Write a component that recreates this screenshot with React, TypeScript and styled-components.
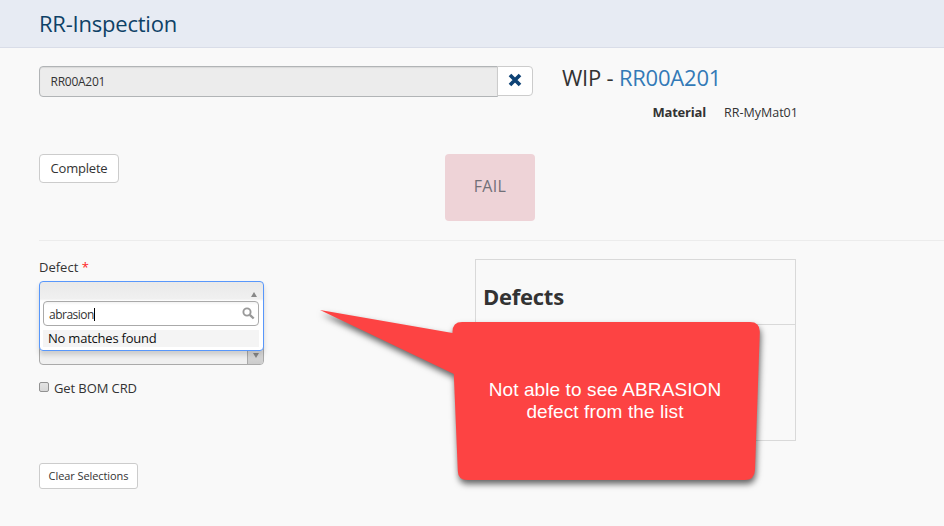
import React from "react";
import styled, { createGlobalStyle } from "styled-components";

const Global = createGlobalStyle`
  * { box-sizing: border-box; }
  html, body { margin: 0; height: 526px; overflow: hidden; background: #f9f9f9; }
  body { font-family: "Open Sans", sans-serif; font-size: 13px; color: #333; }
`;

const Page = styled.div`
  position: relative;
  width: 944px;
  height: 526px;
  overflow: hidden;
  background: #f9f9f9;
`;

const Header = styled.header`
  height: 48px;
  padding-left: 39px;
  background: #e7ebf3;
  border-bottom: 1px solid #d9dde8;
`;

const Title = styled.h1`
  margin: 0;
  font-size: 22px;
  font-weight: 400;
  letter-spacing: -0.22px;
  line-height: 46px;
  color: #0e4166;
`;

const Top = styled.section`
  display: flex;
  height: 193px;
  margin-left: 39px;
  padding-top: 18px;
  border-bottom: 1px solid #ececec;
`;

const Lot = styled.div`
  width: 496px;
`;

const InputGroup = styled.div`
  display: flex;
  align-items: flex-start;
  width: 494px;
`;

const LotField = styled.div`
  width: 459px;
  height: 31px;
  padding-left: 10.5px;
  border: 1px solid #b1b4b6;
  border-radius: 4px 0 0 4px;
  background: #ececec;
  box-shadow: inset 0 1px 1px rgba(0, 0, 0, 0.08);
  font-size: 12px;
  letter-spacing: -0.25px;
  line-height: 30px;
`;

const ClearLot = styled.button`
  display: grid;
  place-items: center;
  width: 36px;
  height: 30px;
  margin-left: -1px;
  padding: 0 0 2px;
  border: 1px solid #ccc;
  border-radius: 0 4px 4px 0;
  background: #fff;
`;

const Actions = styled.div`
  display: flex;
  align-items: flex-start;
  justify-content: space-between;
  margin-top: 57px;
`;

const Button = styled.button<{ $small?: boolean }>`
  display: block;
  width: ${(p) => (p.$small ? 99 : 80)}px;
  height: ${(p) => (p.$small ? 26 : 29)}px;
  padding: 0;
  border: 1px solid #ccc;
  border-radius: ${(p) => (p.$small ? 3 : 4)}px;
  background: #fff;
  color: #333;
  font: ${(p) => (p.$small ? "11px/24px" : "13px/27px")} "Open Sans", sans-serif;
  letter-spacing: ${(p) => (p.$small ? -0.08 : -0.2)}px;
`;

const Fail = styled.div`
  width: 90px;
  height: 67px;
  border-radius: 4px;
  background: #eed3d7;
  color: #717078;
  font-size: 16px;
  letter-spacing: 0.3px;
  line-height: 65px;
  text-align: center;
`;

const Wip = styled.div`
  margin-left: 27px;
`;

const WipTitle = styled.h2`
  margin: -1px 0 0;
  font-size: 22px;
  font-weight: 400;
  letter-spacing: -0.22px;
  line-height: 24px;
  color: #333;
`;

const LotLink = styled.span`
  color: #337ab7;
`;

const Property = styled.dl`
  display: grid;
  grid-template-columns: 144px auto;
  column-gap: 18px;
  margin: 14px 0 0;
  line-height: 18px;
`;

const Term = styled.dt`
  text-align: right;
  font-weight: 700;
  letter-spacing: -0.2px;
`;

const Value = styled.dd`
  margin: 0;
  font-size: 12.5px;
  line-height: 19px;
`;

const Bottom = styled.section`
  display: flex;
  margin-left: 39px;
  padding-top: 18px;
`;

const Form = styled.div`
  width: 436px;
`;

const Label = styled.div`
  height: 22px;
  line-height: 17px;
`;

const Required = styled.span`
  color: #f22;
`;

const Select = styled.div`
  position: relative;
  width: 225px;
  height: 28px;
`;

const Dropdown = styled.div`
  position: absolute;
  z-index: 2;
  top: 0;
  left: 0;
  width: 225px;
  height: 70px;
  border: 1px solid #5897fb;
  border-radius: 4px;
  background: linear-gradient(#e9e9e9, #f0f0f0 17px, #fff 19px);
  box-shadow: 0 4px 5px rgba(0, 0, 0, 0.15);
`;

const DropHead = styled.div`
  display: flex;
  justify-content: flex-end;
  height: 19px;
  padding: 10px 6px 0 0;
`;

const Search = styled.div`
  display: flex;
  align-items: center;
  justify-content: space-between;
  width: 216px;
  height: 25px;
  margin-left: 3px;
  padding: 0 3px 1px 5px;
  border: 1px solid #aaa;
  border-radius: 4px;
  background: linear-gradient(#f3f3f3, #fff 3px);
  font-size: 12px;
  letter-spacing: -0.5px;
`;

const Typed = styled.span`
  position: relative;
  top: 1px;
  border-right: 1px solid #000;
  line-height: 13px;
`;

const NoMatch = styled.div`
  width: 216px;
  height: 17px;
  margin: 4px 0 0 3px;
  padding-left: 5px;
  background: #f4f4f4;
  color: #111;
  letter-spacing: -0.22px;
  line-height: 16px;
`;

const NextSelect = styled.div`
  display: flex;
  justify-content: flex-end;
  width: 225px;
  height: 28px;
  margin-top: 28px;
  border: 1px solid #aaa;
  border-radius: 4px;
  background: #f0f0f0;
  overflow: hidden;
`;

const SelectArrow = styled.div`
  display: grid;
  place-items: center;
  width: 16px;
  padding-top: 8px;
  border-left: 1px solid #aaa;
  background: linear-gradient(#eee, #ccc);
`;

const CheckRow = styled.div`
  display: flex;
  align-items: center;
  height: 20px;
  margin-top: 13px;
  letter-spacing: -0.1px;
`;

const Check = styled.span`
  width: 10px;
  height: 10px;
  margin: 0 5px 2px 0;
  border: 1px solid #929292;
  border-radius: 2px;
  background: linear-gradient(#e4e4e4, #d8d8d8);
`;

const ClearRow = styled.div`
  margin-top: 65px;
`;

const DefectPanel = styled.div`
  width: 321px;
  height: 182px;
  border: 1px solid #d9d9d9;
`;

const PanelTitle = styled.h2`
  height: 65px;
  margin: 0;
  padding: 20px 0 0 7px;
  border-bottom: 1px solid #d9d9d9;
  font-size: 22px;
  font-weight: 700;
  letter-spacing: -0.25px;
  line-height: 32px;
`;

const Callout = styled.div`
  position: absolute;
  z-index: 5;
  left: 310px;
  top: 300px;
  width: 470px;
  height: 200px;
`;

const Bubble = styled.svg`
  display: block;
  overflow: visible;
  filter: drop-shadow(1px 4px 3px rgba(0, 0, 0, 0.6));
`;

const CalloutText = styled.p`
  position: absolute;
  left: 144px;
  top: 79px;
  width: 302px;
  margin: 0;
  color: #fff;
  font: 19px/22px "Liberation Sans", Arial, sans-serif;
  letter-spacing: 0.1px;
  text-align: center;
`;

function Arrow({ up = false }: { up?: boolean }) {
  return (
    <svg width="6" height="5" viewBox="0 0 6 5">
      <path d={up ? "M0 5 3 0 6 5Z" : "M0 0H6L3 5Z"} fill="#888" />
    </svg>
  );
}

export default function App() {
  return (
    <>
      <Global />
      <Page>
        <Header>
          <Title>RR-Inspection</Title>
        </Header>
        <Top>
          <Lot>
            <InputGroup>
              <LotField>RR00A201</LotField>
              <ClearLot aria-label="Clear">
                <svg width="14" height="14" viewBox="0 0 14 14">
                  <path d="M2 2 12 12M12 2 2 12" stroke="#0e4275" strokeWidth="3.7" />
                </svg>
              </ClearLot>
            </InputGroup>
            <Actions>
              <Button>Complete</Button>
              <Fail>FAIL</Fail>
            </Actions>
          </Lot>
          <Wip>
            <WipTitle>
              WIP - <LotLink>RR00A201</LotLink>
            </WipTitle>
            <Property>
              <Term>Material</Term>
              <Value>RR-MyMat01</Value>
            </Property>
          </Wip>
        </Top>
        <Bottom>
          <Form>
            <Label>
              Defect <Required>*</Required>
            </Label>
            <Select>
              <Dropdown>
                <DropHead>
                  <Arrow up />
                </DropHead>
                <Search>
                  <Typed>abrasion</Typed>
                  <svg width="13" height="13" viewBox="0 0 13 13" fill="none" stroke="#999">
                    <circle cx="5" cy="5" r="3.6" strokeWidth="1.9" />
                    <path d="m7.8 7.8 3.9 3.7" strokeWidth="2.4" />
                  </svg>
                </Search>
                <NoMatch>No matches found</NoMatch>
              </Dropdown>
            </Select>
            <NextSelect>
              <SelectArrow>
                <Arrow />
              </SelectArrow>
            </NextSelect>
            <CheckRow>
              <Check />
              Get BOM CRD
            </CheckRow>
            <ClearRow>
              <Button $small>Clear Selections</Button>
            </ClearRow>
          </Form>
          <DefectPanel>
            <PanelTitle>Defects</PanelTitle>
          </DefectPanel>
        </Bottom>
        <Callout>
          <Bubble width="470" height="200" viewBox="310 300 470 200">
            <path
              d="M320 310 452.5 333Q452 322 462 322H750Q760 322 759.8 332L755 470Q754.500 480 745 480H467Q458 480 457.800 471L453.800 374Z"
              fill="#fd4343"
            />
          </Bubble>
          <CalloutText>
            Not able to see ABRASION
            <br />
            defect from the list
          </CalloutText>
        </Callout>
      </Page>
    </>
  );
}
